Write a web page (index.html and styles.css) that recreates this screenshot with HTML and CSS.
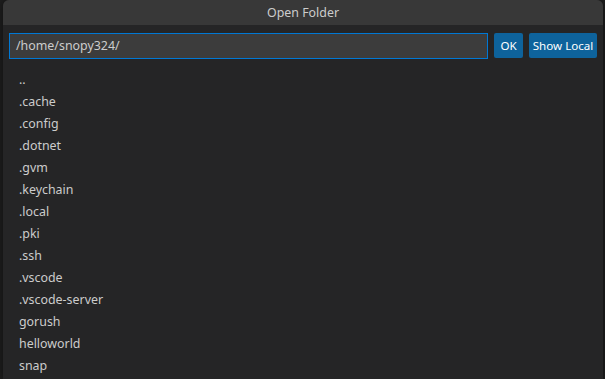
FILE: index.html
```html
<!DOCTYPE html>
<html>
<head>
<meta charset="utf-8">
<link rel="stylesheet" href="styles.css">
</head>
<body>
<div class="widget">
  <div class="title">Open Folder</div>
  <div class="input-row">
    <div class="input">/home/snopy324/</div>
    <button class="btn ok">OK</button>
    <button class="btn local">Show Local</button>
  </div>
  <ul class="list">
    <li>..</li>
    <li>.cache</li>
    <li>.config</li>
    <li>.dotnet</li>
    <li>.gvm</li>
    <li>.keychain</li>
    <li>.local</li>
    <li>.pki</li>
    <li>.ssh</li>
    <li>.vscode</li>
    <li>.vscode-server</li>
    <li>gorush</li>
    <li>helloworld</li>
    <li>snap</li>
  </ul>
</div>
</body>
</html>
```
FILE: styles.css
```css
html, body {
  margin: 0;
  padding: 0;
  height: 100%;
  overflow: hidden;
  background: #1e1e1e;
  font-family: "Noto Sans", "Open Sans", sans-serif;
  color: #cccccc;
}
.widget {
  margin-left: 3px;
  width: 600px;
  height: 379px;
  background: #252526;
  border-radius: 6px 6px 0 0;
  overflow: hidden;
  box-shadow: 0 0 8px rgba(0,0,0,0.5);
}
.title {
  height: 25px;
  line-height: 25px;
  background: #383838;
  text-align: center;
  font-size: 12.4px;
  color: #cccccc;
}
.input-row {
  display: flex;
  align-items: flex-start;
  gap: 6px;
  padding: 8px 6px 0 6px;
}
.input {
  flex: 1;
  box-sizing: border-box;
  height: 26px;
  line-height: 24px;
  border: 1px solid #0078d4;
  background: #3c3c3c;
  padding: 0 6px;
  font-size: 12.4px;
  color: #cccccc;
}
.btn {
  box-sizing: border-box;
  height: 25px;
  border: none;
  border-radius: 2px;
  background: #0e639c;
  color: #ffffff;
  font-family: inherit;
  font-size: 11.6px;
  padding: 0;
  line-height: 25px;
  text-align: center;
}
.ok {
  width: 29px;
}
.local {
  width: 68px;
}
.list {
  list-style: none;
  margin: 0;
  padding: 10px 0 0 0;
}
.list li {
  height: 22px;
  line-height: 22px;
  padding-left: 16px;
  font-size: 12.4px;
  color: #cccccc;
}
```
